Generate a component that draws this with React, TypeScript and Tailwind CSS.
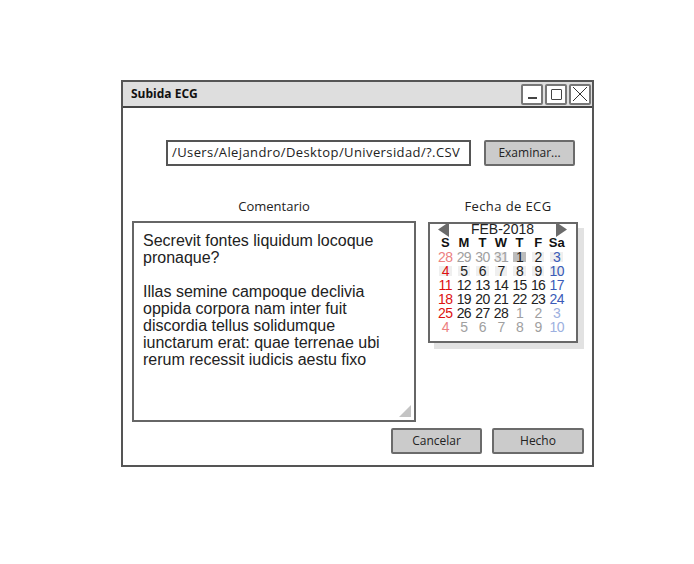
import React from "react";

type Day = { n: number; tone: "cur" | "other"; bg?: "light" | "dark" };

const ROWS: Day[][] = [
  [
    { n: 28, tone: "other" },
    { n: 29, tone: "other" },
    { n: 30, tone: "other" },
    { n: 31, tone: "other", bg: "light" },
    { n: 1, tone: "cur", bg: "dark" },
    { n: 2, tone: "cur", bg: "light" },
    { n: 3, tone: "cur", bg: "light" },
  ],
  [4, 5, 6, 7, 8, 9, 10].map((n) => ({ n, tone: "cur" as const, bg: "light" as const })),
  [11, 12, 13, 14, 15, 16, 17].map((n) => ({ n, tone: "cur" as const })),
  [18, 19, 20, 21, 22, 23, 24].map((n) => ({ n, tone: "cur" as const })),
  [
    { n: 25, tone: "cur" },
    { n: 26, tone: "cur" },
    { n: 27, tone: "cur" },
    { n: 28, tone: "cur" },
    { n: 1, tone: "other" },
    { n: 2, tone: "other" },
    { n: 3, tone: "other" },
  ],
  [4, 5, 6, 7, 8, 9, 10].map((n) => ({ n, tone: "other" as const })),
];

const HEAD = ["S", "M", "T", "W", "T", "F", "Sa"];

const sketch = "font-['Open_Sans','Lato',sans-serif]";
const btn =
  "flex h-[26px] items-center justify-center rounded-[2px] border-2 border-[#6b6b6b] bg-[#cbcbcb] text-[12px] text-[#222]";

function dayColor(col: number, tone: Day["tone"]) {
  if (col === 0) return tone === "cur" ? "text-[#d11]" : "text-[#ec8080]";
  if (col === 6) return tone === "cur" ? "text-[#3a5bb8]" : "text-[#9db0e0]";
  return tone === "cur" ? "text-[#222]" : "text-[#a0a0a0]";
}

function Calendar() {
  return (
    <div className="w-[150px] border-2 border-[#686868] bg-white pb-[7px] shadow-[6px_6px_0_#e2e2e2] font-['Liberation_Sans',Arial,sans-serif]">
      <div className="-mt-[2px] flex h-[14px] items-center justify-between pl-[8px] pr-[9px]">
        <svg width="11" height="15" viewBox="0 0 11 15">
          <path d="M11 0 L0 7.5 L11 15 Z" fill="#6b6b6b" />
        </svg>
        <span className="text-[14px] leading-[14px] text-[#222]">FEB-2018</span>
        <svg width="11" height="15" viewBox="0 0 11 15">
          <path d="M0 0 L11 7.5 L0 15 Z" fill="#6b6b6b" />
        </svg>
      </div>
      <div className="grid w-[136px] grid-cols-7 pl-[6px]">
        {HEAD.map((h, i) => (
          <div key={i} className="flex h-[14px] items-center justify-center text-[13px] font-bold leading-[14px] text-[#111]">
            {h}
          </div>
        ))}
        {ROWS.map((row, r) =>
          row.map((d, c) => (
            <div key={`${r}-${c}`} className="relative flex h-[14px] items-center justify-center">
              {d.bg ? (
                <div
                  className={`absolute inset-x-[3px] inset-y-[2px] ${d.bg === "dark" ? "bg-[#bcbcbc]" : "bg-[#efefef]"}`}
                />
              ) : null}
              <span className={`relative text-[14px] leading-[14px] tracking-[-0.6px] ${dayColor(c, d.tone)}`}>{d.n}</span>
            </div>
          ))
        )}
      </div>
    </div>
  );
}

export default function App() {
  return (
    <div className="h-[564px] w-[694px] bg-white pl-[121px] pt-[80px]">
      <div className={`flex h-[387px] w-[473px] flex-col border-2 border-[#555] bg-white ${sketch}`}>
        {/* title bar */}
        <div className="flex h-[26px] items-center justify-between border-b-2 border-[#444] bg-[#dedede] pl-[8px] pr-[1px]">
          <span className="text-[12px] font-bold text-[#111]">Subida ECG</span>
          <div className="flex gap-[2px]">
            <div className="flex h-[21px] w-[22px] items-end justify-center rounded-[2px] border-2 border-[#777] bg-white pb-[4px]">
              <div className="h-[2px] w-[9px] bg-[#444]" />
            </div>
            <div className="flex h-[21px] w-[22px] items-center justify-center rounded-[2px] border-2 border-[#777] bg-white">
              <div className="h-[11px] w-[11px] rounded-[1px] border-[1.5px] border-[#444]" />
            </div>
            <div className="flex h-[21px] w-[22px] items-center justify-center rounded-[2px] border-2 border-[#777] bg-white">
              <svg width="16" height="16" viewBox="0 0 16 16">
                <path d="M1 1 L15 15 M15 1 L1 15" stroke="#333" strokeWidth="1" />
              </svg>
            </div>
          </div>
        </div>

        {/* file row */}
        <div className="mt-[32px] flex items-center gap-[13px] pl-[43px]">
          <div className="flex h-[26px] w-[305px] items-center border-2 border-[#555] bg-white pl-[4px] text-[13px] tracking-[0.4px] text-[#222]">
            /Users/Alejandro/Desktop/Universidad/?.CSV
          </div>
          <div className={`${btn} w-[91px]`}>Examinar...</div>
        </div>

        {/* comment + date */}
        <div className="mt-[32px] flex gap-[12px] pl-[9px]">
          <div className="flex flex-col items-center">
            <div className="h-[23px] text-[13px] leading-[16px] text-[#222]">Comentario</div>
            <div className="relative h-[201px] w-[284px] border-2 border-[#666] bg-white px-[9px] pt-[9px] font-['Liberation_Sans',Arial,sans-serif] text-[16px] leading-[17px] text-[#222]">
              <p>Secrevit fontes liquidum locoque pronaque?</p>
              <p className="mt-[17px]">
                Illas semine campoque declivia oppida corpora nam inter fuit discordia tellus solidumque iunctarum erat: quae terrenae ubi rerum recessit iudicis aestu fixo
              </p>
              <svg className="absolute bottom-[3px] right-[3px]" width="12" height="12" viewBox="0 0 12 12">
                <path d="M12 0 L12 12 L0 12 Z" fill="#c4c4c4" />
              </svg>
            </div>
          </div>
          <div className="flex w-[160px] flex-col items-center">
            <div className="h-[24px] text-[13px] leading-[16px] tracking-[0.4px] text-[#222]">Fecha de ECG</div>
            <div className="self-start">
              <Calendar />
            </div>
          </div>
        </div>

        {/* actions */}
        <div className="mt-[6px] flex justify-end gap-[10px] pr-[8px]">
          <div className={`${btn} w-[91px]`}>Cancelar</div>
          <div className={`${btn} w-[92px]`}>Hecho</div>
        </div>
      </div>
    </div>
  );
}
